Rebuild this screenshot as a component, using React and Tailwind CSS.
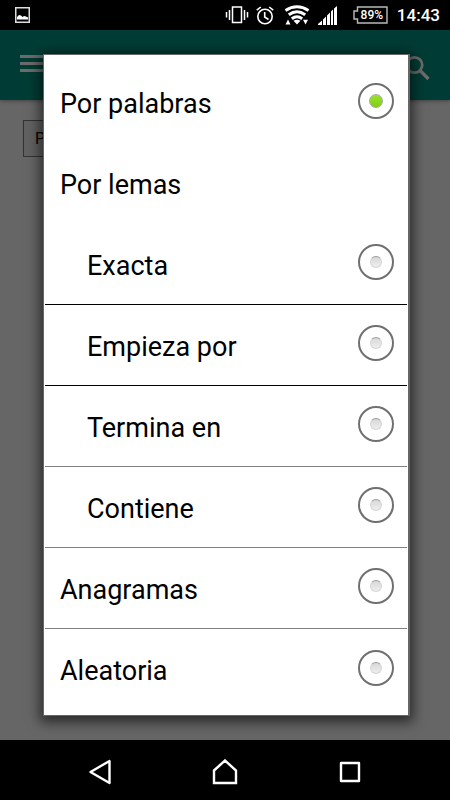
import { useState } from "react";

const options = [
  { id: "palabras", label: "Por palabras" },
  { id: "lemas", label: "Por lemas", heading: true },
  { id: "exacta", label: "Exacta", nested: true, line: "border-black" },
  { id: "empieza", label: "Empieza por", nested: true, line: "border-black" },
  { id: "termina", label: "Termina en", nested: true, line: "border-[#808080]" },
  { id: "contiene", label: "Contiene", nested: true, line: "border-[#808080]" },
  { id: "anagramas", label: "Anagramas", line: "border-[#808080]" },
  { id: "aleatoria", label: "Aleatoria" },
];

function StatusBar() {
  return (
    <div className="flex h-[30px] items-center bg-black pr-[10px] pl-[15px] text-white">
      <svg width="15" height="16" viewBox="0 0 15 16" aria-hidden="true">
        <rect x="0.75" y="0.75" width="13.5" height="14.5" fill="none" stroke="#ddd" strokeWidth="1.5" />
        <path d="M2 12.5V10l2-2 2 .5 1.5 1.5L9 9l2 .5 2 1v2z" fill="#fff" />
      </svg>
      <div className="ml-auto flex items-center">
        <svg width="24" height="18" viewBox="0 0 24 18" fill="none" stroke="#fff" strokeWidth="1.5" aria-hidden="true">
          <rect x="7.5" y="1" width="9" height="15.5" />
          <path d="M4.5 4v10M1.5 6v5.5M19.5 4v10M22.5 6v5.5" />
        </svg>
        <svg className="ml-[7px]" width="18" height="19" viewBox="0 0 18 19" fill="none" stroke="#fff" strokeWidth="1.6" aria-hidden="true">
          <circle cx="9" cy="10.5" r="7.2" />
          <path d="M8.7 6v5l3.8 2.5M.8 4.2l4-3.2M17.2 4.2l-4-3.2" />
        </svg>
        <svg className="ml-[10px]" width="26" height="22" viewBox="0 0 26 22" fill="none" stroke="#fff" strokeWidth="3" aria-hidden="true">
          <path d="M1.500 6.500q11.500-7.500 23 0M4.800 10.800q8.200-6 16.400 0M7.800 14.800q5.200-4 10.400 0" />
          <path d="M13 20.500l-3.500-3.800q3.500-2 7 0zM1.500 20.500l2.500-5 2.500 5zM19 15.800h5l-2.500 4.700z" fill="#fff" stroke="none" />
        </svg>
        <svg className="ml-[8px]" width="19" height="19" viewBox="0 0 19 19" fill="#fff" aria-hidden="true">
          <path d="M0 19v-1l4-3.500V19zM5 19v-5.500l3-3V19zM9 19V9.500l3-3V19zM13 19V5.500l2-2V19zM16 19V2.500L19 0v19z" />
        </svg>
        <span className="relative ml-[16px] flex h-[18px] w-[35px] items-center justify-center pl-[3px] text-[12px] leading-none font-medium">
          <svg className="absolute inset-0" width="35" height="18" viewBox="0 0 35 18" fill="none" stroke="#bbb" strokeWidth="1.4" aria-hidden="true">
            <path d="M4.500 1h29.500v16H4.500v-4H1V5h3.500z" />
          </svg>
          <span>89%</span>
        </span>
        <span className="ml-[9px] text-[17px] leading-none font-medium">14:43</span>
      </div>
    </div>
  );
}

function Option({ option, selected, onSelect }) {
  const box = `mx-px flex h-[81px] items-center pr-[13px] ${option.nested ? "pl-[42px]" : "pl-[15px]"} ${
    option.line ? `border-b ${option.line}` : ""
  }`;
  if (option.heading)
    return (
      <h2 className={box}>
        <span className="pt-1">{option.label}</span>
      </h2>
    );
  return (
    <label className={box}>
      <span className="flex-1 pt-1">{option.label}</span>
      <input
        type="radio"
        name="modo"
        value={option.id}
        checked={selected}
        onChange={onSelect}
        className="mb-1 grid size-9 shrink-0 appearance-none place-items-center rounded-full border-2 border-[#707070] bg-white after:block after:size-3 after:rounded-full after:border after:border-[#d6d6d6] after:border-t-[#999] after:bg-linear-to-b after:from-[#d8d8d8] after:to-[#eee] after:content-[''] checked:after:size-[14px] checked:after:border-[#aaa] checked:after:from-[#9be22d] checked:after:to-[#7fd00f]"
      />
    </label>
  );
}

export default function App() {
  const [mode, setMode] = useState("palabras");
  return (
    <div className="flex min-h-screen flex-col bg-black font-[Roboto,sans-serif]">
      <StatusBar />
      <main className="relative flex flex-1 flex-col bg-[#666]">
        <header className="flex h-[70px] items-center justify-between bg-[#003c35] pr-[19px] pb-[3px] pl-5 shadow-[0_1px_4px_rgba(0,0,0,0.35)]">
          <button type="button" aria-label="Menú" className="flex w-[30px] flex-col gap-1">
            <span className="h-[3px] bg-[#6c6c6c]" />
            <span className="h-[3px] bg-[#6c6c6c]" />
            <span className="h-[3px] bg-[#6c6c6c]" />
          </button>
          <button type="button" aria-label="Buscar">
            <svg width="27" height="33" viewBox="0 0 27 33" fill="none" stroke="#6c6c6c" strokeWidth="2.800" aria-hidden="true">
              <circle cx="10.500" cy="18" r="7.700" />
              <path d="M16 23.500l8.500 8.500" strokeWidth="3.400" />
            </svg>
          </button>
        </header>
        <div className="px-[23px] pt-5">
          <button type="button" className="h-[37px] border border-[#333] bg-[#616161] px-[11px] text-base text-black">
            Por palabras
          </button>
        </div>
        <div className="absolute inset-0 flex items-center pr-10 pl-[43px]">
          <div
            role="dialog"
            aria-label="Tipo de búsqueda"
            className="w-full border border-[#666] border-r-2 bg-white pt-[7px] pb-[5px] text-[27px] text-black shadow-[0_3px_12px_3px_rgba(0,0,0,0.6)]"
          >
            {options.map((option) => (
              <Option
                key={option.id}
                option={option}
                selected={mode === option.id}
                onSelect={() => setMode(option.id)}
              />
            ))}
          </div>
        </div>
      </main>
      <nav className="flex h-[60px] items-center justify-between bg-black px-[87px] pt-1">
        <button type="button" aria-label="Atrás">
          <svg width="26" height="26" viewBox="0 0 26 26" fill="none" stroke="#fff" strokeWidth="2.400" strokeLinejoin="round" aria-hidden="true">
            <path d="M22.500 2v22L3.500 13z" />
          </svg>
        </button>
        <button type="button" aria-label="Inicio">
          <svg width="26" height="26" viewBox="0 0 26 26" fill="none" stroke="#fff" strokeWidth="2.400" aria-hidden="true">
            <path d="M2 11.500L13 1.500l11 10V24H2z" />
          </svg>
        </button>
        <button type="button" aria-label="Recientes">
          <svg width="26" height="26" viewBox="0 0 26 26" fill="none" stroke="#fff" strokeWidth="2.400" strokeLinejoin="round" aria-hidden="true">
            <rect x="4" y="4" width="18" height="18" />
          </svg>
        </button>
      </nav>
    </div>
  );
}
